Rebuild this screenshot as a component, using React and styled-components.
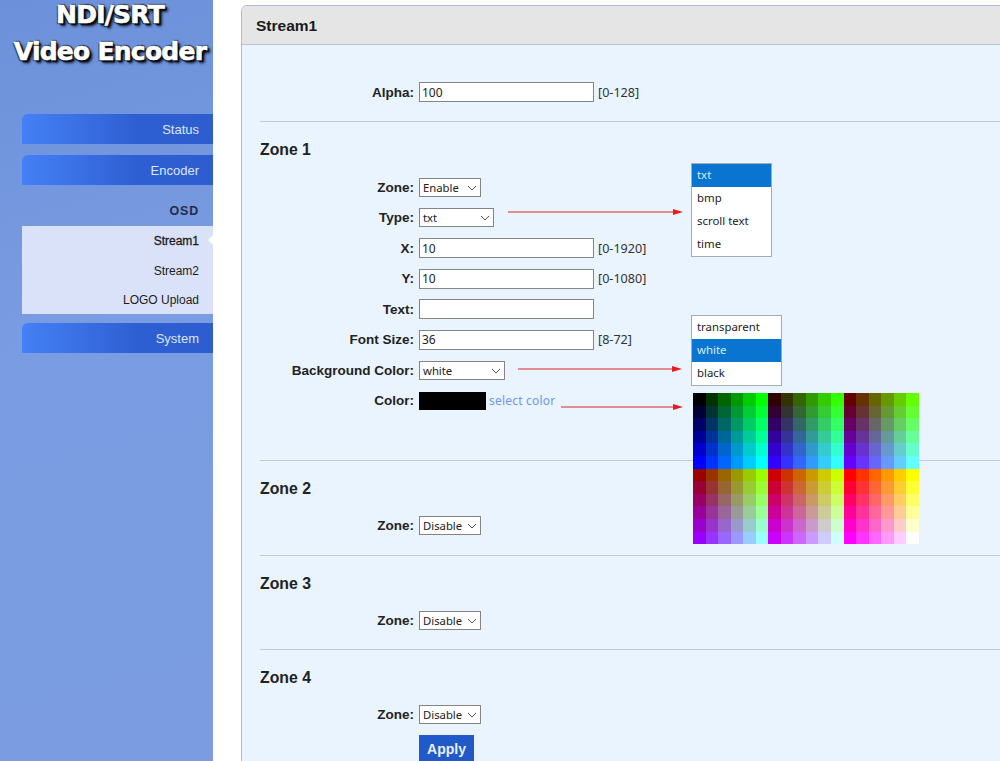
import React from 'react';
import styled, { createGlobalStyle } from 'styled-components';

const GlobalStyle = createGlobalStyle`
  html, body {
    margin: 0;
    padding: 0;
    background: #fff;
    font-family: "Liberation Sans", Arial, sans-serif;
  }
`;

const Page = styled.div`
  position: relative;
  display: flex;
  width: 1000px;
  height: 761px;
  overflow: hidden;
  background: #fff;
`;

const Sidebar = styled.aside`
  flex: 0 0 213px;
  display: flex;
  flex-direction: column;
  background: linear-gradient(165deg, #6c91da 0%, #7a9ce2 45%, #7b9ce0 100%);
`;

const Logo = styled.div`
  height: 118px;
  margin-top: -4px;
  padding-left: 7px;
  box-sizing: border-box;
  text-align: center;
  font-family: "DejaVu Sans", sans-serif;
  font-weight: 700;
  font-size: 25px;
  line-height: 37px;
  letter-spacing: -0.75px;
  color: #fff;
  -webkit-text-stroke: 0.6px #fff;
  text-shadow: 2px 2px 1px #0b0d14, 3px 3px 3px #0b0d14, -1px 1px 1px #1c2338, 1px -1px 1px #1c2338;
`;

const NavButton = styled.div`
  height: 30px;
  margin: 0 0 11px 22px;
  padding-right: 14px;
  border-radius: 6px 0 0 0;
  background: linear-gradient(90deg, #4480f6 0%, #3a70e4 30%, #2e5fd2 60%, #2d5dce 100%);
  color: #dbe6fb;
  font-size: 13px;
  line-height: 31px;
  text-align: right;
`;

const NavGroupTitle = styled.div`
  margin: 0 14px 0 22px;
  height: 30px;
  color: #232b45;
  font-size: 12.5px;
  font-weight: 700;
  letter-spacing: 0.8px;
  line-height: 30px;
  text-align: right;
`;

const SubMenu = styled.div`
  display: flex;
  flex-direction: column;
  height: 88px;
  margin: 0 0 9px 22px;
  background: #d9e2f8;
`;

const SubItem = styled.div`
  position: relative;
  height: 29.5px;
  padding-right: 14px;
  color: #1c1c1c;
  font-size: 12px;
  font-weight: 400;
  line-height: 30px;
  text-align: right;
  -webkit-text-stroke: ${({ $active }) => ($active ? '0.3px #1c1c1c' : '0')};

  ${({ $active }) =>
    $active &&
    `
    &::after {
      content: '';
      position: absolute;
      right: 0;
      top: 9px;
      border: 5px solid transparent;
      border-right-color: #fff;
      border-left-width: 0;
    }
  `}
`;

const Main = styled.main`
  flex: 1;
  min-width: 0;
  padding: 5px 0 0 28px;
`;

const Panel = styled.section`
  width: 800px;
  border: 1px solid #a9bddf;
  border-radius: 6px 0 0 0;
  background: #eaf4ff;
`;

const PanelHeader = styled.header`
  height: 38px;
  padding-left: 14px;
  border-bottom: 1px solid #b4c4dd;
  border-radius: 6px 0 0 0;
  background: #e5e5e5;
  color: #1a1a1a;
  font-size: 15.5px;
  font-weight: 700;
  line-height: 39px;
`;

const PanelBody = styled.div`
  padding: 32px 0 0 18px;
`;

const Row = styled.div`
  display: grid;
  grid-template-columns: 154px 1fr;
  column-gap: 5px;
  align-items: center;
  height: 30.5px;
`;

const Label = styled.label`
  color: #222;
  font-size: 13.5px;
  font-weight: 700;
  text-align: right;
`;

const Controls = styled.div`
  display: flex;
  align-items: center;
  gap: 4px;
`;

const Divider = styled.hr`
  height: 1px;
  margin: ${({ $top }) => $top}px 0 0;
  border: 0;
  background: #c8ccd0;
`;

const ZoneTitle = styled.h3`
  height: 20px;
  margin: 17px 0 ${({ $below }) => $below ?? 12.5}px;
  color: #222;
  font-size: 15.8px;
  font-weight: 700;
  line-height: 22px;
`;

const SelectBox = styled.div`
  position: relative;
  display: inline-flex;
  width: ${({ $width }) => $width}px;
  height: 19px;
`;

const Select = styled.select`
  appearance: none;
  box-sizing: border-box;
  width: 100%;
  height: 100%;
  padding: 0 0 0 3px;
  border: 1px solid #858585;
  border-radius: 0;
  background: #fff;
  color: #222;
  font-family: "Noto Sans", sans-serif;
  font-size: 11.3px;
`;

const Chevron = styled.svg`
  position: absolute;
  right: 4px;
  top: 7px;
  pointer-events: none;
`;

const TextInput = styled.input`
  box-sizing: border-box;
  width: 175px;
  height: 20px;
  padding: 0 2px;
  border: 1px solid #858585;
  background: #fff;
  color: #222;
  font-family: "Noto Sans", sans-serif;
  font-size: 12px;
`;

const Hint = styled.span`
  color: #333;
  font-family: "Noto Sans", sans-serif;
  font-size: 12.6px;
`;

const Swatch = styled.div`
  width: 67px;
  height: 18px;
  background: #000;
`;

const ColorLink = styled.a`
  margin-left: -1px;
  color: #6f97e8;
  font-family: "Noto Sans", sans-serif;
  font-size: 12px;
  letter-spacing: 0.2px;
`;

const ApplyButton = styled.button`
  display: block;
  width: 55px;
  height: 29px;
  margin: 4.5px 0 0 159px;
  padding: 0;
  border: 0;
  background: #2259c8;
  color: #e8f0ff;
  font-family: "Liberation Sans", sans-serif;
  font-size: 14px;
  font-weight: 700;
`;

const Dropdown = styled.ul`
  position: absolute;
  left: 691px;
  top: ${({ $top }) => $top}px;
  box-sizing: border-box;
  width: ${({ $width }) => $width}px;
  margin: 0;
  padding: 0;
  border: 1px solid #a4abb3;
  background: #fff;
  list-style: none;
`;

const DropdownItem = styled.li`
  height: 23px;
  padding-left: 5px;
  background: ${({ $selected }) => ($selected ? '#0a75d1' : 'transparent')};
  color: ${({ $selected }) => ($selected ? '#d8ecff' : '#222')};
  font-family: "Noto Sans", sans-serif;
  font-size: 11.4px;
  line-height: 21px;
`;

const ArrowSvg = styled.svg`
  position: absolute;
  left: ${({ $left }) => $left}px;
  top: ${({ $top }) => $top - 4}px;
`;

const Palette = styled.div`
  position: absolute;
  left: 693px;
  top: 393px;
  display: grid;
  grid-template-columns: repeat(18, 12.55px);
  grid-auto-rows: 12.6px;
`;

const Arrow = ({ left, top, width }) => (
  <ArrowSvg $left={left} $top={top} width={width} height={8} viewBox={`0 0 ${width} 8`}>
    <line x1="0" y1="4" x2={width - 6} y2="4" stroke="#dc2626" strokeWidth="1" />
    <polygon points={`${width - 10},1 ${width},4 ${width - 10},7`} fill="#e81c1c" />
  </ArrowSvg>
);

const hex = (n) => n.toString(16).padStart(2, '0');

// web-safe table: 2 rows of 3 blocks, red steps per block, green across, blue down
const paletteCells = [];
for (let bank = 0; bank < 2; bank++) {
  for (let blue = 0; blue < 6; blue++) {
    for (let block = 0; block < 3; block++) {
      for (let green = 0; green < 6; green++) {
        const red = (bank * 3 + block) * 51;
        paletteCells.push(`#${hex(red)}${hex(green * 51)}${hex(blue * 51)}`);
      }
    }
  }
}

const Dropbox = ({ width, value, options }) => (
  <SelectBox $width={width}>
    <Select defaultValue={value}>
      {options.map((option) => (
        <option key={option}>{option}</option>
      ))}
    </Select>
    <Chevron width="10" height="6" viewBox="0 0 10 6">
      <path d="M1 1 L5 5 L9 1" fill="none" stroke="#555" strokeWidth="1" />
    </Chevron>
  </SelectBox>
);

const ZoneSelect = ({ value }) => <Dropbox width={62} value={value} options={['Enable', 'Disable']} />;

const ZoneBlock = ({ number, top }) => (
  <>
    <Divider $top={top} />
    <ZoneTitle>Zone {number}</ZoneTitle>
    <Row>
      <Label>Zone:</Label>
      <Controls>
        <ZoneSelect value="Disable" />
      </Controls>
    </Row>
  </>
);

const App = () => (
  <>
    <GlobalStyle />
    <Page>
      <Sidebar>
        <Logo>
          NDI/SRT
          <br />
          Video Encoder
        </Logo>
        <NavButton>Status</NavButton>
        <NavButton>Encoder</NavButton>
        <NavGroupTitle>OSD</NavGroupTitle>
        <SubMenu>
          <SubItem $active>Stream1</SubItem>
          <SubItem>Stream2</SubItem>
          <SubItem>LOGO Upload</SubItem>
        </SubMenu>
        <NavButton>System</NavButton>
      </Sidebar>

      <Main>
        <Panel>
          <PanelHeader>Stream1</PanelHeader>
          <PanelBody>
            <Row>
              <Label>Alpha:</Label>
              <Controls>
                <TextInput defaultValue="100" />
                <Hint>[0-128]</Hint>
              </Controls>
            </Row>
            <Divider $top={13} />
            <ZoneTitle $below={13.5}>Zone 1</ZoneTitle>
            <Row>
              <Label>Zone:</Label>
              <Controls>
                <ZoneSelect value="Enable" />
              </Controls>
            </Row>
            <Row>
              <Label>Type:</Label>
              <Controls>
                <Dropbox width={75} value="txt" options={['txt', 'bmp', 'scroll text', 'time']} />
              </Controls>
            </Row>
            <Row>
              <Label>X:</Label>
              <Controls>
                <TextInput defaultValue="10" />
                <Hint>[0-1920]</Hint>
              </Controls>
            </Row>
            <Row>
              <Label>Y:</Label>
              <Controls>
                <TextInput defaultValue="10" />
                <Hint>[0-1080]</Hint>
              </Controls>
            </Row>
            <Row>
              <Label>Text:</Label>
              <Controls>
                <TextInput defaultValue="" />
              </Controls>
            </Row>
            <Row>
              <Label>Font Size:</Label>
              <Controls>
                <TextInput defaultValue="36" />
                <Hint>[8-72]</Hint>
              </Controls>
            </Row>
            <Row>
              <Label>Background Color:</Label>
              <Controls>
                <Dropbox width={86} value="white" options={['transparent', 'white', 'black']} />
              </Controls>
            </Row>
            <Row>
              <Label>Color:</Label>
              <Controls>
                <Swatch />
                <ColorLink>select color</ColorLink>
              </Controls>
            </Row>
            <ZoneBlock number={2} top={44} />
            <ZoneBlock number={3} top={13.5} />
            <ZoneBlock number={4} top={13.5} />
            <ApplyButton>Apply</ApplyButton>
          </PanelBody>
        </Panel>
      </Main>

      <Arrow left={508} top={212} width={175} />
      <Arrow left={518} top={369} width={164} />
      <Arrow left={561} top={407} width={122} />

      <Dropdown $top={163} $width={81}>
        <DropdownItem $selected>txt</DropdownItem>
        <DropdownItem>bmp</DropdownItem>
        <DropdownItem>scroll text</DropdownItem>
        <DropdownItem>time</DropdownItem>
      </Dropdown>

      <Dropdown $top={315} $width={91}>
        <DropdownItem>transparent</DropdownItem>
        <DropdownItem $selected>white</DropdownItem>
        <DropdownItem>black</DropdownItem>
      </Dropdown>

      <Palette>
        {paletteCells.map((color, i) => (
          <div key={i} style={{ background: color }} />
        ))}
      </Palette>
    </Page>
  </>
);

export default App;
